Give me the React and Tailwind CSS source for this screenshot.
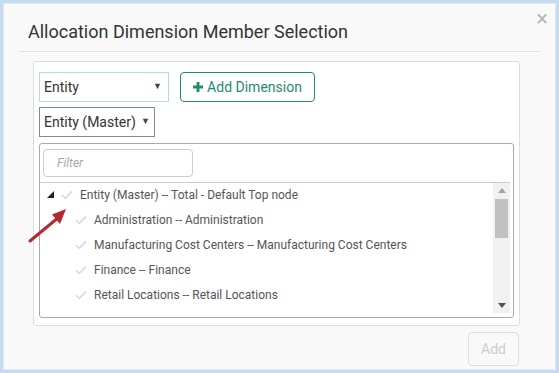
import React from "react";

const Check = ({ className = "" }) => (
  <svg width="12" height="10" viewBox="0 0 12 10" className={className}>
    <path d="M1 5.2 L4.3 8.3 L11 1.5" fill="none" stroke="#dcdcdc" strokeWidth="1.8" />
  </svg>
);

const Row = ({ label, top }) => (
  <div className={`flex items-center h-[25px] ${top ? "pl-[7px]" : "pl-[35px]"}`}>
    {top && (
      <svg width="7" height="7" viewBox="0 0 7 7" className="mr-[7px]">
        <path d="M0 7 L7 7 L7 0 Z" fill="#222" />
      </svg>
    )}
    <Check className="mr-[7px]" />
    <span className="text-[12px] text-[#555] whitespace-nowrap">{label}</span>
  </div>
);

export default function App() {
  return (
    <div className="w-[559px] h-[373px] bg-[#c5daf3] p-[3px]" style={{ fontFamily: "Roboto, 'Noto Sans', sans-serif" }}>
      <div className="relative w-[553px] h-[367px] bg-[#f9f9f9] border border-[#e6e6e6]">
        <div className="absolute right-[7px] top-[4px] text-[#b5b5b5] text-[22px] leading-none">×</div>
        <div className="mx-[15px] border-b border-[#e2e2e2] pt-[17px] pb-[8px] pl-[9px]">
          <div className="text-[18px] text-[#333] leading-[22px]">Allocation Dimension Member Selection</div>
        </div>
        <div className="ml-[29px] mt-[9px] w-[487px] h-[265px] bg-white border border-[#ddd] rounded-[3px] px-[5px] pt-[10px]">
          <div className="flex gap-[11px]">
            <div className="w-[130px] h-[30px] border border-[#b3e0d6] flex items-center justify-between px-[4px]">
              <span className="text-[14px] text-[#333]">Entity</span>
              <span className="text-[9px] text-[#444] mr-[2px]">▼</span>
            </div>
            <div className="w-[135px] h-[30px] border border-[#1f8a6f] rounded-[4px] flex items-center justify-center gap-[4px] text-[#1f8a6f]">
              <svg width="10" height="10" viewBox="0 0 10 10"><path d="M3.6 0h2.8v3.6H10v2.8H6.4V10H3.6V6.4H0V3.6h3.6z" fill="#1f8a6f" /></svg>
              <span className="text-[14px]">Add Dimension</span>
            </div>
          </div>
          <div className="mt-[5px] w-[116px] h-[30px] border border-[#888] flex items-center justify-between px-[4px]">
            <span className="text-[14px] text-[#333]">Entity (Master)</span>
            <span className="text-[9px] text-[#444]">▼</span>
          </div>
          <div className="mt-[6px] w-[475px] h-[175px] border border-[#aaa] rounded-[3px] flex flex-col">
            <div className="h-[39px] border-b border-[#ccc] px-[3px] pt-[5px] mr-[3px]">
              <div className="w-[150px] h-[28px] border border-[#ccc] rounded-[4px] flex items-center pl-[13px]">
                <span className="text-[12px] italic text-[#aaa]">Filter</span>
              </div>
            </div>
            <div className="flex flex-1 mr-[3px] mb-[4px]">
              <div className="flex-1 -mt-[1px]">
                <Row top label="Entity (Master) -- Total - Default Top node" />
                <Row label="Administration -- Administration" />
                <Row label="Manufacturing Cost Centers -- Manufacturing Cost Centers" />
                <Row label="Finance -- Finance" />
                <Row label="Retail Locations -- Retail Locations" />
              </div>
              <div className="w-[17px] bg-[#f1f1f1] flex flex-col items-center">
                <svg width="8" height="5" viewBox="0 0 8 5" className="mt-[5px]"><path d="M0 5 L4 0 L8 5Z" fill="#a3a3a3" /></svg>
                <div className="w-[13px] h-[39px] bg-[#c1c1c1] mt-[6px]" />
                <div className="flex-1" />
                <svg width="8" height="5" viewBox="0 0 8 5" className="mb-[5px]"><path d="M0 0 L8 0 L4 5Z" fill="#505050" /></svg>
              </div>
            </div>
          </div>
        </div>
        <div className="flex justify-end pr-[36px] mt-[6px]">
          <div className="w-[51px] h-[34px] border border-[#ddd] rounded-[4px] flex items-center justify-center text-[14px] text-[#ccc]">Add</div>
        </div>
        <svg className="absolute left-[22px] top-[201px]" width="44" height="40" viewBox="0 0 44 40">
          <path d="M4 36 L33 12" stroke="#b22a2e" strokeWidth="3" strokeLinecap="round" />
          <path d="M40 4 L26 9.5 L34 19 Z" fill="#b22a2e" />
        </svg>
      </div>
    </div>
  );
}
